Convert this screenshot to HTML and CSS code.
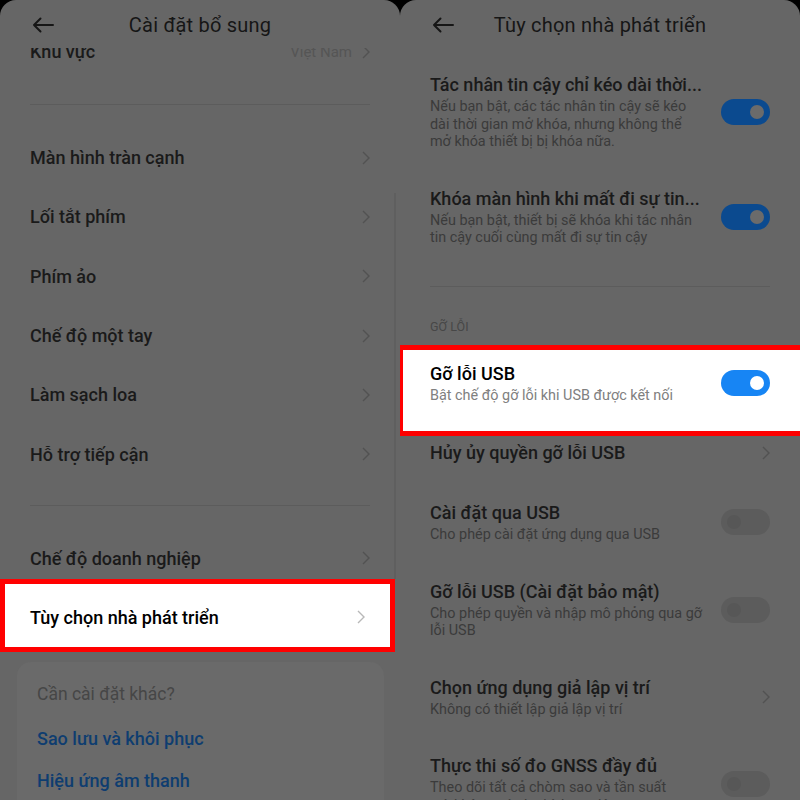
FILE: index.html
```html
<!DOCTYPE html>
<html lang="vi">
<head>
<meta charset="utf-8">
<title>Cài đặt</title>
<link rel="stylesheet" href="styles.css">
</head>
<body>
<div class="screen">
  <section class="panel">
    <header class="header">
      <svg class="back" width="22" height="16" viewBox="0 0 22 16"><path d="M21 8H2M8.5 1.5L2 8l6.5 6.5" fill="none" stroke="#161616" stroke-width="2" stroke-linecap="round" stroke-linejoin="round"/></svg>
      <h1 class="title">Cài đặt bổ sung</h1>
    </header>
    <div class="peek">
      <div class="peek-line"><span>Khu vực</span><span class="value">Việt Nam<svg class="chev" width="8" height="14" viewBox="0 0 8 14"><path d="M1 1l6 6-6 6" fill="none" stroke="#525252" stroke-width="1.4"/></svg></span></div>
    </div>
    <div class="divider first"></div>
    <div class="group">
      <div class="row"><span>Màn hình tràn cạnh</span><svg class="chev" width="8" height="14" viewBox="0 0 8 14"><path d="M1 1l6 6-6 6" fill="none" stroke="#525252" stroke-width="1.4"/></svg></div>
      <div class="row"><span>Lối tắt phím</span><svg class="chev" width="8" height="14" viewBox="0 0 8 14"><path d="M1 1l6 6-6 6" fill="none" stroke="#525252" stroke-width="1.4"/></svg></div>
      <div class="row"><span>Phím ảo</span><svg class="chev" width="8" height="14" viewBox="0 0 8 14"><path d="M1 1l6 6-6 6" fill="none" stroke="#525252" stroke-width="1.4"/></svg></div>
      <div class="row"><span>Chế độ một tay</span><svg class="chev" width="8" height="14" viewBox="0 0 8 14"><path d="M1 1l6 6-6 6" fill="none" stroke="#525252" stroke-width="1.4"/></svg></div>
      <div class="row"><span>Làm sạch loa</span><svg class="chev" width="8" height="14" viewBox="0 0 8 14"><path d="M1 1l6 6-6 6" fill="none" stroke="#525252" stroke-width="1.4"/></svg></div>
      <div class="row"><span>Hỗ trợ tiếp cận</span><svg class="chev" width="8" height="14" viewBox="0 0 8 14"><path d="M1 1l6 6-6 6" fill="none" stroke="#525252" stroke-width="1.4"/></svg></div>
    </div>
    <div class="divider second"></div>
    <div class="group2">
      <div class="row"><span>Chế độ doanh nghiệp</span><svg class="chev" width="8" height="14" viewBox="0 0 8 14"><path d="M1 1l6 6-6 6" fill="none" stroke="#525252" stroke-width="1.4"/></svg></div>
      <div class="row hl-left"><span>Tùy chọn nhà phát triển</span><svg class="chev" width="8" height="14" viewBox="0 0 8 14"><path d="M1 1l6 6-6 6" fill="none" stroke="#b8b8b8" stroke-width="1.4"/></svg></div>
    </div>
    <div class="card">
      <div class="card-title">Cần cài đặt khác?</div>
      <div class="link">Sao lưu và khôi phục</div>
      <div class="link">Hiệu ứng âm thanh</div>
    </div>
    <div class="scrollbar"></div>
  </section>

  <section class="panel">
    <header class="header">
      <svg class="back" width="22" height="16" viewBox="0 0 22 16"><path d="M21 8H2M8.5 1.5L2 8l6.5 6.5" fill="none" stroke="#161616" stroke-width="2" stroke-linecap="round" stroke-linejoin="round"/></svg>
      <h1 class="title">Tùy chọn nhà phát triển</h1>
    </header>
    <div class="list">
      <div class="item top">
        <div class="text">
          <div class="it">Tác nhân tin cậy chỉ kéo dài thời...</div>
          <div class="sub">Nếu bạn bật, các tác nhân tin cậy sẽ kéo<br>dài thời gian mở khóa, nhưng không thể<br>mở khóa thiết bị bị khóa nữa.</div>
        </div>
        <div class="toggle on"><span class="knob"></span></div>
      </div>
      <div class="item">
        <div class="text">
          <div class="it">Khóa màn hình khi mất đi sự tin...</div>
          <div class="sub">Nếu bạn bật, thiết bị sẽ khóa khi tác nhân<br>tin cậy cuối cùng mất đi sự tin cậy</div>
        </div>
        <div class="toggle on"><span class="knob"></span></div>
      </div>
      <div class="divider right"></div>
      <div class="section">GỠ LỖI</div>
      <div class="item hl-right">
        <div class="text">
          <div class="it">Gỡ lỗi USB</div>
          <div class="sub">Bật chế độ gỡ lỗi khi USB được kết nối</div>
        </div>
        <div class="toggle bright"><span class="knob"></span></div>
      </div>
      <div class="item after-hl">
        <div class="text">
          <div class="it">Hủy ủy quyền gỡ lỗi USB</div>
        </div>
        <svg class="chev" width="8" height="14" viewBox="0 0 8 14"><path d="M1 1l6 6-6 6" fill="none" stroke="#525252" stroke-width="1.4"/></svg>
      </div>
      <div class="item">
        <div class="text">
          <div class="it">Cài đặt qua USB</div>
          <div class="sub">Cho phép cài đặt ứng dụng qua USB</div>
        </div>
        <div class="toggle off"><span class="knob"></span></div>
      </div>
      <div class="item">
        <div class="text">
          <div class="it">Gỡ lỗi USB (Cài đặt bảo mật)</div>
          <div class="sub">Cho phép quyền và nhập mô phỏng qua gỡ<br>lỗi USB</div>
        </div>
        <div class="toggle off"><span class="knob"></span></div>
      </div>
      <div class="item">
        <div class="text">
          <div class="it">Chọn ứng dụng giả lập vị trí</div>
          <div class="sub">Không có thiết lập giả lập vị trí</div>
        </div>
        <svg class="chev" width="8" height="14" viewBox="0 0 8 14"><path d="M1 1l6 6-6 6" fill="none" stroke="#525252" stroke-width="1.4"/></svg>
      </div>
      <div class="item">
        <div class="text">
          <div class="it">Thực thi số đo GNSS đầy đủ</div>
          <div class="sub">Theo dõi tất cả chòm sao và tần suất<br>mà không có chu kỳ hoạt động</div>
        </div>
        <div class="toggle off"><span class="knob"></span></div>
      </div>
    </div>
  </section>
</div>
</body>
</html>
```

FILE: styles.css
```css
* { box-sizing: border-box; }
html, body { margin: 0; padding: 0; background: #000; }
body {
  width: 800px;
  height: 800px;
  overflow: hidden;
  font-family: Roboto, "Noto Sans", "Liberation Sans", sans-serif;
}
.screen {
  display: flex;
  width: 800px;
  height: 800px;
}
.panel {
  position: relative;
  width: 400px;
  height: 800px;
  background: #666666;
  border-radius: 16px 16px 0 0;
  overflow: hidden;
}
.header {
  display: grid;
  grid-template-columns: 1fr auto 1fr;
  align-items: center;
  height: 48px;
  padding-top: 2px;
}
.back { margin-left: 32px; display: block; }
.title {
  margin: 0;
  font-size: 20px;
  font-weight: 400;
  color: #161616;
  letter-spacing: 0.2px;
}
.peek {
  height: 14px;
  overflow: hidden;
  padding: 0 30px;
}
.peek-line {
  display: flex;
  justify-content: space-between;
  align-items: center;
  margin-top: -8px;
  line-height: 24px;
  font-size: 18px;
  font-weight: 500;
  color: #1a1a1a;
}
.value {
  display: flex;
  align-items: center;
  gap: 10px;
  font-size: 15px;
  font-weight: 400;
  color: #555555;
}
.divider {
  height: 1px;
  background: #5c5c5c;
  margin: 0 30px;
}
.divider.first { margin-top: 42px; }
.divider.second { margin-top: 21px; }
.group { padding-top: 23px; }
.row {
  display: flex;
  justify-content: space-between;
  align-items: center;
  height: 59.3px;
  padding: 0 30px;
  font-size: 18px;
  font-weight: 500;
  color: #1a1a1a;
}
.chev { display: block; flex: none; }
.group2 { padding-top: 23px; }
.row.hl-left {
  width: 395px;
  height: 73px;
  margin-top: -9px;
  padding: 3px 25px 0 25px;
  background: #ffffff;
  border: 5px solid #ff0000;
  color: #000;
}
.card {
  margin: 10px 16px 0 17px;
  height: 200px;
  border-radius: 14px;
  background: #6a6a6a;
  padding: 20px 20px 0 20px;
}
.card-title {
  font-size: 17.5px;
  line-height: 24px;
  color: #464646;
  margin-bottom: 21px;
}
.link {
  font-size: 18px;
  line-height: 24px;
  font-weight: 500;
  color: #0e3d70;
  margin-bottom: 18px;
}
.scrollbar {
  position: absolute;
  left: 394px;
  top: 193px;
  width: 2px;
  height: 386px;
  background: #5f5f5f;
}

.list { padding-top: 7px; }
.item {
  display: flex;
  align-items: center;
  padding: 18px 30px;
  gap: 12px;
}
.text { flex: 1; min-width: 0; }
.it {
  font-size: 18px;
  line-height: 24px;
  font-weight: 500;
  color: #1a1a1a;
  white-space: nowrap;
}
.sub {
  margin-top: 1px;
  font-size: 14.4px;
  line-height: 17.5px;
  color: #3b3b3b;
}
.divider.right { margin-top: 21px; }
.section {
  margin: 30px 30px 8px;
  font-size: 12.5px;
  line-height: 20px;
  color: #474747;
}
.item.hl-right {
  margin-left: -2px;
  padding: 12px 30px 27px 27px;
  background: #ffffff;
  border: 5px solid #ff0000;
  border-right: none;
}
.item.hl-right .it { color: #000; }
.item.hl-right .sub { color: #808080; }
.item.after-hl { padding-top: 5px; }
.toggle {
  flex: none;
  position: relative;
  width: 49px;
  height: 26px;
  border-radius: 13px;
  display: flex;
  align-items: center;
  padding: 0 6px;
}
.knob {
  width: 14px;
  height: 14px;
  border-radius: 50%;
}
.toggle.on { background: #0b4a8f; justify-content: flex-end; }
.toggle.on .knob { background: #6b6b6b; }
.toggle.bright { background: #1785f4; justify-content: flex-end; }
.toggle.bright .knob { background: #ffffff; }
.toggle.off { background: #5c5c5c; justify-content: flex-start; }
.toggle.off .knob { background: #575757; }
```
